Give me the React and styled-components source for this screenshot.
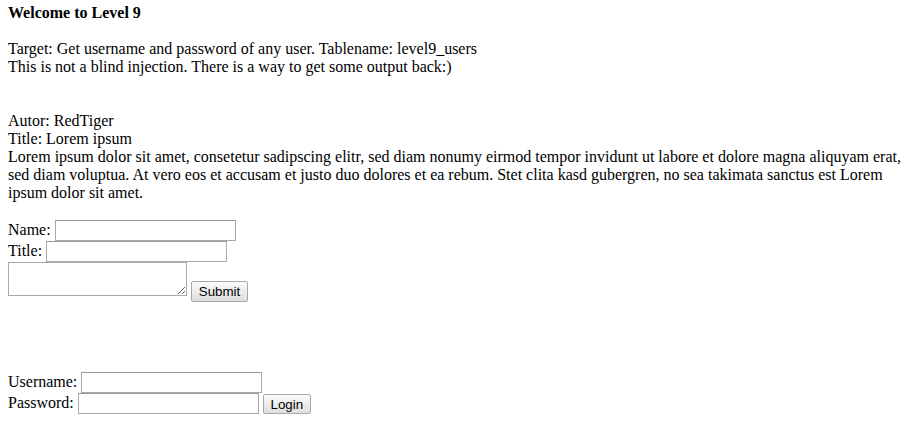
import React from "react";
import styled, { createGlobalStyle } from "styled-components";

const GlobalStyle = createGlobalStyle`
  html, body {
    margin: 0;
    background: #ffffff;
  }
  body {
    padding: 4px 8px 8px;
    font-family: "Liberation Serif", "Times New Roman", serif;
    font-size: 16px;
    color: #000000;
  }
`;

const Page = styled.div`
  width: 893px;
`;

const Heading = styled.b`
  display: block;
  font-weight: bold;
`;

const Intro = styled.div`
  margin-top: 18px;
`;

const Post = styled.div`
  margin-top: 36px;
`;

const Form = styled.form`
  margin: ${(p) => p.$top}px 0 0;
`;

const Line = styled.div`
  display: block;
  line-height: ${(p) => (p.$h || 21) - 2}px;
  height: ${(p) => p.$h || 21}px;
`;

const Label = styled.span`
  margin-right: 4px;
`;

const TextInput = styled.input`
  box-sizing: border-box;
  width: 181px;
  height: 21px;
  margin: 0;
  padding: 1px 2px;
  border: 1px solid #a9a9a9;
  border-top-color: #9a9a9a;
  font: 13.33px "Liberation Sans", Arial, sans-serif;
  vertical-align: top;
  background: #fff;
`;

const TextArea = styled.textarea`
  box-sizing: border-box;
  width: 179px;
  height: 34px;
  margin: 0;
  padding: 2px;
  border: 1px solid #a9a9a9;
  font: 13.33px "Liberation Mono", monospace;
  vertical-align: top;
`;

const Button = styled.button`
  box-sizing: border-box;
  width: ${(p) => p.$w}px;
  height: ${(p) => p.$hgt || 21}px;
  margin: ${(p) => p.$mt || 0}px 0 0 4px;
  padding: 0 6px;
  border: 1px solid #a9a9a9;
  border-radius: 2px;
  background: linear-gradient(#fbfbfb, #dedede);
  font: 13.33px "Liberation Sans", Arial, sans-serif;
  color: #000;
  vertical-align: top;
`;

export default function App() {
  return (
    <Page>
      <GlobalStyle />
      <Heading>Welcome to Level 9</Heading>
      <Intro>
        Target: Get username and password of any user. Tablename: level9_users
        <br />
        This is not a blind injection. There is a way to get some output back:)
      </Intro>
      <Post>
        Autor: RedTiger
        <br />
        Title: Lorem ipsum
        <br />
        Lorem ipsum dolor sit amet, consetetur sadipscing elitr, sed diam nonumy
        eirmod tempor invidunt ut labore et dolore magna aliquyam erat, sed diam
        voluptua. At vero eos et accusam et justo duo dolores et ea rebum. Stet
        clita kasd gubergren, no sea takimata sanctus est Lorem ipsum dolor sit
        amet.
      </Post>
      <Form $top={18}>
        <Line>
          <Label>Name:</Label>
          <TextInput type="text" />
        </Line>
        <Line>
          <Label>Title:</Label>
          <TextInput type="text" />
        </Line>
        <Line $h={40}>
          <TextArea />
          <Button type="button" $w={57} $mt={19}>
            Submit
          </Button>
        </Line>
      </Form>
      <Form $top={70}>
        <Line>
          <Label>Username:</Label>
          <TextInput type="text" />
        </Line>
        <Line>
          <Label>Password:</Label>
          <TextInput type="text" />
          <Button type="button" $w={48} $hgt={20} $mt={1}>
            Login
          </Button>
        </Line>
      </Form>
    </Page>
  );
}
